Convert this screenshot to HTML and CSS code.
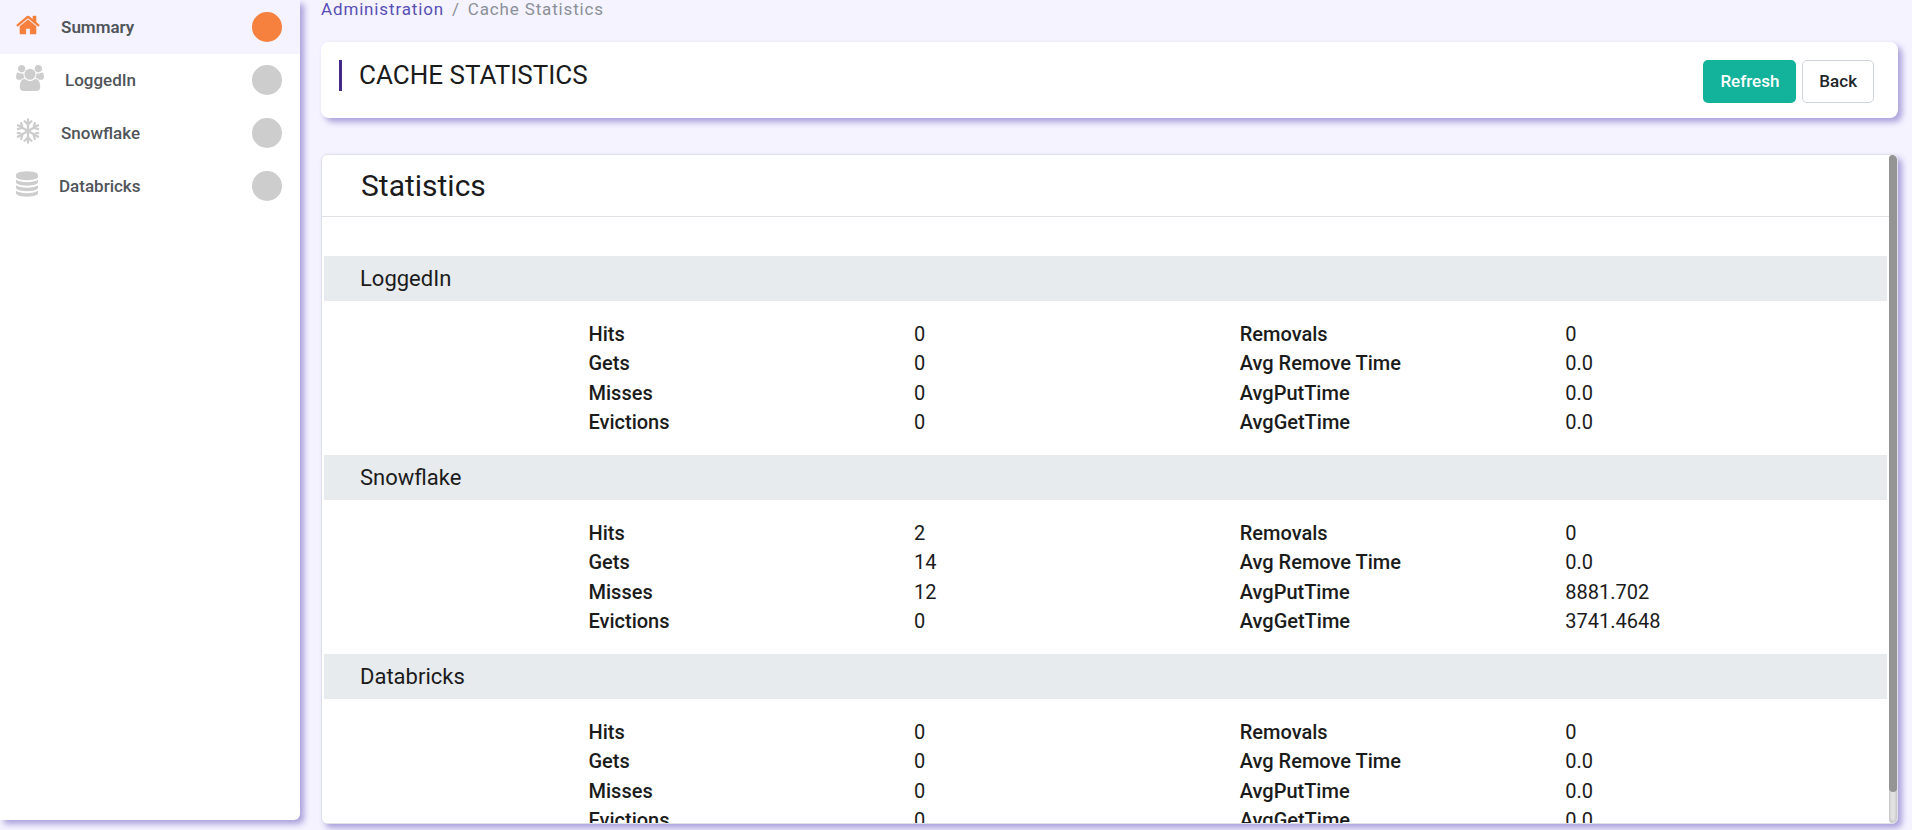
FILE: index.html
```html
<!DOCTYPE html>
<html lang="en">
<head>
<meta charset="utf-8">
<title>Cache Statistics</title>
<link rel="stylesheet" href="styles.css">
</head>
<body>
<div class="app">
  <nav class="sidebar" aria-label="Caches">
    <a class="nav-item active" href="#summary">
      <svg class="icon icon-medium" viewBox="64 0 1664 1792" aria-hidden="true"><path d="M1472 992v480q0 26-19 45t-45 19h-384v-384h-256v384h-384q-26 0-45-19t-19-45v-480q0-1 .5-3t.5-3l575-474 575 474q1 2 1 6zm223-69l-62 74q-8 9-21 11h-3q-13 0-21-7l-692-577-692 577q-12 8-24 7-13-2-21-11l-62-74q-8-10-7-23.500t11-21.500l719-599q32-26 76-26t76 26l244 204v-195q0-14 9-23t23-9h192q14 0 23 9t9 23v408l219 182q10 8 11 21.500t-7 23.500z"/></svg>
      <span class="nav-label">Summary</span><span class="dot"></span>
    </a>
    <a class="nav-item" href="#loggedin">
      <svg class="icon icon-wide" viewBox="0 0 1920 1792" aria-hidden="true"><path d="M593 896q-162 5-265 128h-134q-82 0-138-40.500t-56-118.500q0-353 124-353 6 0 43.500 21t97.500 42.500 119 21.500q67 0 133-23-5 37-5 66 0 139 81 256zm1071 637q0 120-73 189.500t-194 69.500h-874q-121 0-194-69.500t-73-189.500q0-53 3.500-103.500t14-109 26.500-108.500 43-97.500 62-81 85.500-53.500 111.500-20q10 0 43 21.500t73 48 107 48 135 21.500 135-21.500 107-48 73-48 43-21.500q61 0 111.500 20t85.500 53.500 62 81 43 97.500 26.500 108.500 14 109 3.500 103.500zm-1024-1277q0 106-75 181t-181 75-181-75-75-181 75-181 181-75 181 75 75 181zm704 384q0 159-112.500 271.500t-271.500 112.500-271.500-112.500-112.500-271.500 112.500-271.500 271.500-112.500 271.500 112.500 112.500 271.500zm576 225q0 78-56 118.500t-138 40.500h-134q-103-123-265-128 81-117 81-256 0-29-5-66 66 23 133 23 59 0 119-21.500t97.500-42.500 43.500-21q124 0 124 353zm-128-609q0 106-75 181t-181 75-181-75-75-181 75-181 181-75 181 75 75 181z"/></svg>
      <span class="nav-label">LoggedIn</span><span class="dot"></span>
    </a>
    <a class="nav-item" href="#snowflake">
      <svg class="icon icon-medium" viewBox="0 0 24 26" aria-hidden="true"><defs><path id="arm" d="M12 13V1.300M8.600 3.200 12 6.600l3.400-3.400"/></defs><g fill="none" stroke="currentColor" stroke-width="2.300" stroke-linecap="round"><use href="#arm"/><use href="#arm" transform="rotate(60 12 13)"/><use href="#arm" transform="rotate(120 12 13)"/><use href="#arm" transform="rotate(180 12 13)"/><use href="#arm" transform="rotate(240 12 13)"/><use href="#arm" transform="rotate(300 12 13)"/></g></svg>
      <span class="nav-label">Snowflake</span><span class="dot"></span>
    </a>
    <a class="nav-item" href="#databricks">
      <svg class="icon icon-narrow" viewBox="128 0 1536 1792" aria-hidden="true"><path d="M896 768q237 0 443-43t325-127v170q0 69-103 128t-280 93.500-385 34.500-385-34.500-280-93.500-103-128v-170q119 84 325 127t443 43zm0 768q237 0 443-43t325-127v170q0 69-103 128t-280 93.500-385 34.500-385-34.500-280-93.500-103-128v-170q119 84 325 127t443 43zm0-384q237 0 443-43t325-127v170q0 69-103 128t-280 93.500-385 34.500-385-34.500-280-93.500-103-128v-170q119 84 325 127t443 43zm0-1152q208 0 385 34.500t280 93.500 103 128v128q0 69-103 128t-280 93.500-385 34.500-385-34.500-280-93.500-103-128v-128q0-69 103-128t280-93.500 385-34.500z"/></svg>
      <span class="nav-label">Databricks</span><span class="dot"></span>
    </a>
  </nav>

  <main class="main">
    <nav class="breadcrumb" aria-label="Breadcrumb">
      <a href="#administration">Administration</a><span>/</span><span>Cache Statistics</span>
    </nav>
    <header class="title-card">
      <h1 class="page-title">CACHE STATISTICS</h1>
      <div class="actions">
        <button class="btn btn-primary" type="button">Refresh</button>
        <button class="btn btn-outline" type="button">Back</button>
      </div>
    </header>
    <section class="stats-card">
      <div class="stats-scroll">
        <h2 class="stats-title">Statistics</h2>
        <div class="stats-body">
          <section id="loggedin">
            <h3 class="group-title">LoggedIn</h3>
            <div class="group-body"><table class="stats-table">
              <tr><th scope="row">Hits</th><td>0</td><th scope="row">Removals</th><td>0</td></tr>
              <tr><th scope="row">Gets</th><td>0</td><th scope="row">Avg Remove Time</th><td>0.0</td></tr>
              <tr><th scope="row">Misses</th><td>0</td><th scope="row">AvgPutTime</th><td>0.0</td></tr>
              <tr><th scope="row">Evictions</th><td>0</td><th scope="row">AvgGetTime</th><td>0.0</td></tr>
            </table></div>
          </section>
          <section id="snowflake">
            <h3 class="group-title">Snowflake</h3>
            <div class="group-body"><table class="stats-table">
              <tr><th scope="row">Hits</th><td>2</td><th scope="row">Removals</th><td>0</td></tr>
              <tr><th scope="row">Gets</th><td>14</td><th scope="row">Avg Remove Time</th><td>0.0</td></tr>
              <tr><th scope="row">Misses</th><td>12</td><th scope="row">AvgPutTime</th><td>8881.702</td></tr>
              <tr><th scope="row">Evictions</th><td>0</td><th scope="row">AvgGetTime</th><td>3741.4648</td></tr>
            </table></div>
          </section>
          <section id="databricks">
            <h3 class="group-title">Databricks</h3>
            <div class="group-body"><table class="stats-table">
              <tr><th scope="row">Hits</th><td>0</td><th scope="row">Removals</th><td>0</td></tr>
              <tr><th scope="row">Gets</th><td>0</td><th scope="row">Avg Remove Time</th><td>0.0</td></tr>
              <tr><th scope="row">Misses</th><td>0</td><th scope="row">AvgPutTime</th><td>0.0</td></tr>
              <tr><th scope="row">Evictions</th><td>0</td><th scope="row">AvgGetTime</th><td>0.0</td></tr>
            </table></div>
          </section>
        </div>
      </div>
      <div class="scroll-track" aria-hidden="true"><div class="scroll-thumb"></div></div>
    </section>
  </main>
</div>
</body>
</html>
```
FILE: styles.css
```css
:root {
  --page: #f5f3ff;
  --shadow: 4px 4px 6px #a89fda;
  --ink: #1b1b1b;
}

* { box-sizing: border-box; }

body {
  margin: 0;
  background: var(--page);
  color: var(--ink);
  font-family: Roboto, "Liberation Sans", sans-serif;
  font-size: 17px;
}

.app {
  display: flex;
  gap: 21px;
  height: 100vh;
  overflow: hidden;
}

.sidebar {
  flex: 0 0 300px;
  margin-bottom: 10px;
  border-top: 1px solid var(--page);
  background: #fff;
  border-radius: 0 0 6px 0;
  box-shadow: var(--shadow);
}

.nav-item {
  display: flex;
  gap: 21px;
  height: 53px;
  padding: 11px 18px 0 16px;
  color: #50555a;
  font-weight: 500;
  text-decoration: none;
}

.nav-item.active {
  background: var(--page);
  font-weight: 600;
}

.icon {
  flex: none;
  height: 26px;
  color: #cdcdcd;
  fill: currentColor;
}

.icon-narrow { width: 22px; }
.icon-medium { width: 24px; }
.icon-wide { width: 28px; }
.active .icon { color: #f6803d; }

.nav-label {
  flex: 1;
  line-height: 31px;
}

.dot {
  width: 30px;
  height: 30px;
  border-radius: 50%;
  background: #cdcdcd;
}

.active .dot { background: #f6803d; }

.main {
  flex: 1;
  min-width: 0;
  display: flex;
  flex-direction: column;
  padding: 0 14px 6px 0;
}

.breadcrumb {
  display: flex;
  gap: 8px;
  line-height: 18px;
  letter-spacing: 0.05em;
  color: #8b9098;
}

.breadcrumb a {
  color: #584fb5;
  text-decoration: none;
}

.title-card {
  display: flex;
  justify-content: space-between;
  align-items: flex-start;
  margin: 24px 0 36px;
  padding: 18px 24px 15px 18px;
  background: #fff;
  border-radius: 8px;
  box-shadow: var(--shadow);
}

.page-title {
  margin: 0;
  padding-left: 17px;
  border-left: 3px solid #432a8a;
  font-size: 26px;
  font-weight: 400;
  line-height: 31px;
}

.actions {
  display: flex;
  gap: 6px;
}

.btn {
  height: 43px;
  padding: 0 16px 2px;
  border: 1px solid transparent;
  border-radius: 5px;
  font: 500 17px Roboto, "Liberation Sans", sans-serif;
}

.btn-primary {
  background: #12b29b;
  color: #fff;
}

.btn-outline {
  background: #fff;
  border-color: #ced4da;
  color: #212529;
}

.stats-card {
  flex: 1;
  min-height: 0;
  display: flex;
  background: #fff;
  border: 1px solid #dee2e6;
  border-radius: 6px;
  box-shadow: var(--shadow);
  overflow: hidden;
}

.stats-scroll {
  flex: 1;
  overflow-y: auto;
  scrollbar-width: none;
}

.scroll-track {
  flex: 0 0 8px;
  border-radius: 4px;
  background: #e8e8e8;
  box-shadow: inset 0 0 4px rgba(0, 0, 0, 0.3);
}

.scroll-thumb {
  height: 95.4%;
  border-radius: 4px;
  background: #949494;
}

.stats-title {
  margin: 0;
  padding: 0 39px;
  border-bottom: 1px solid #dee2e6;
  font-size: 30px;
  font-weight: 400;
  line-height: 61px;
}

.stats-body { padding: 39px 2px 2px; }

.group-title {
  margin: 0;
  padding-left: 36px;
  background: #e7ebee;
  font-size: 22px;
  font-weight: 400;
  line-height: 45px;
}

.group-body { padding: 18px 0; }

.stats-table {
  width: 83.3333%;
  height: 118px;
  margin-left: 16.6667%;
  border-collapse: collapse;
  table-layout: fixed;
  font-size: 20px;
  line-height: 28px;
}

.stats-table th,
.stats-table td {
  padding: 0 4px;
  text-align: left;
}

.stats-table th { font-weight: 500; }
.stats-table td { font-weight: 400; }
```
